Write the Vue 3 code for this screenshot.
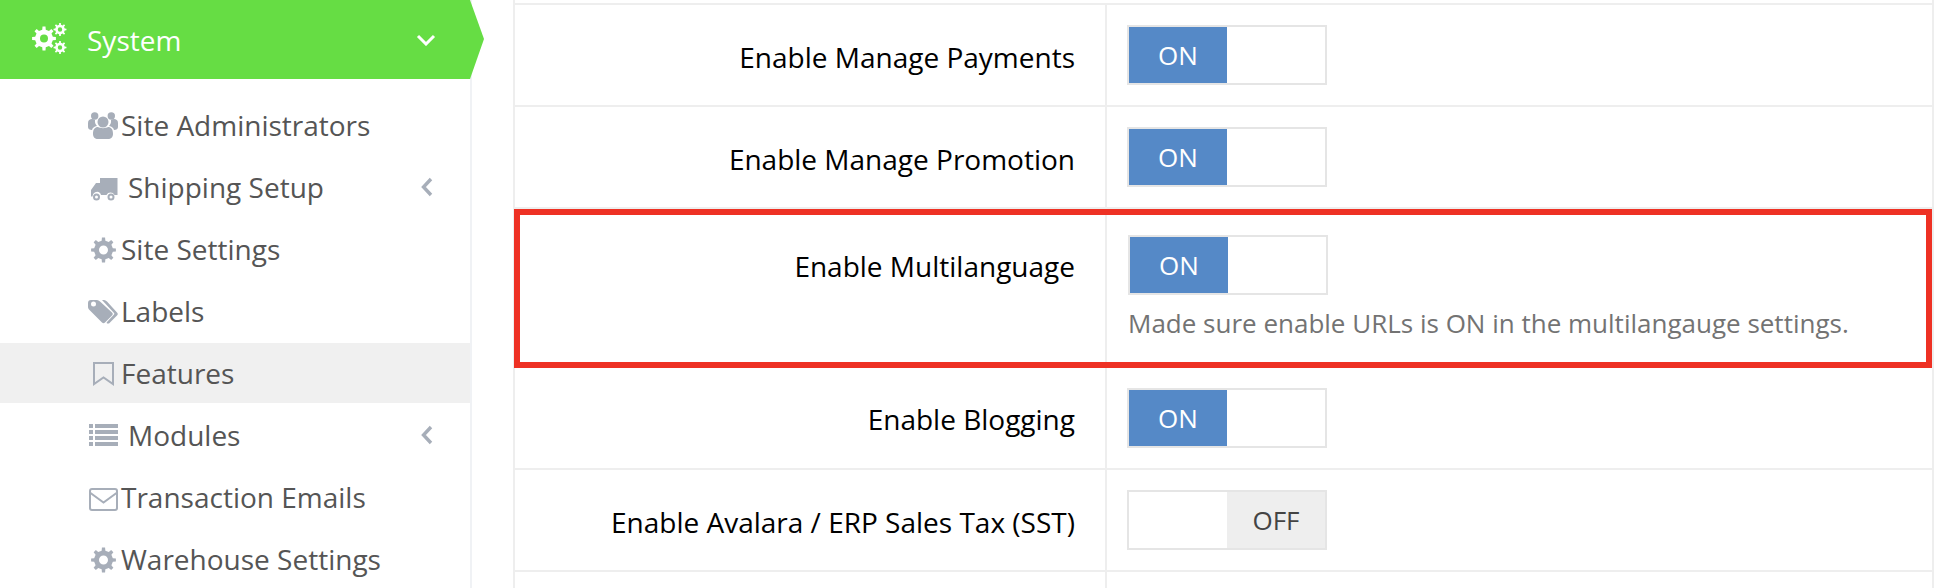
<script setup>
// gear outline as a path, teeth are plain trapezoids
function gear(cx, cy, outer, inner, hole, teeth = 8) {
  const step = (Math.PI * 2) / teeth
  const pts = []
  for (let i = 0; i < teeth; i++) {
    const a = i * step - Math.PI / 2
    const w = step * 0.2
    pts.push([a - w * 1.25, inner], [a - w * 0.8, outer], [a + w * 0.8, outer], [a + w * 1.25, inner])
  }
  const line = pts
    .map(([a, r], i) => `${i ? 'L' : 'M'}${(cx + Math.cos(a) * r).toFixed(2)} ${(cy + Math.sin(a) * r).toFixed(2)}`)
    .join('')
  return `${line}ZM${cx - hole} ${cy}a${hole} ${hole} 0 1 0 ${hole * 2} 0a${hole} ${hole} 0 1 0 ${-hole * 2} 0Z`
}

const cogs = [gear(12, 15.5, 12, 9, 4), gear(28, 6.5, 6.5, 4.8, 2.2), gear(28, 24.5, 6.5, 4.8, 2.2)]

const icons = {
  users: {
    fill: [
      'M9.5 12a5.5 5.5 0 1 0 11 0a5.5 5.5 0 1 0-11 0Z',
      'M3 6a3.7 3.7 0 1 0 7.4 0a3.7 3.7 0 1 0-7.4 0Z',
      'M19.600 6a3.7 3.7 0 1 0 7.4 0a3.7 3.7 0 1 0-7.4 0Z',
      'M0 13c0-3 2-4 4-4c1 0 2 .5 3 1c-.5 3 1 5 2 6c-3 .5-4.500 2-5 4c-2.500 0-4-1-4-3Z',
      'M30 13c0-3-2-4-4-4c-1 0-2 .5-3 1c.5 3-1 5-2 6c3 .5 4.500 2 5 4c2.500 0 4-1 4-3Z',
      'M5 24c0-5 2-7 5-7c2 1.500 8 1.500 10 0c3 0 5 2 5 7c0 3-2 5-5 5h-10c-3 0-5-2-5-5Z',
    ],
  },
  truck: {
    fill: [
      'M12 6h17.500v17h-3a4.500 4.500 0 0 0-8 0h-5.500a4.500 4.500 0 0 0-1-2Z',
      'M3 18l5-7h4v10a4.500 4.500 0 0 0-7.500 3.500h-1.500Z',
      'M5 25a3.500 3.500 0 1 0 7 0a3.500 3.500 0 1 0-7 0Zm2 0a1.500 1.500 0 1 1 3 0a1.500 1.500 0 1 1-3 0Z',
      'M19.500 25a3.500 3.500 0 1 0 7 0a3.500 3.500 0 1 0-7 0Zm2 0a1.500 1.500 0 1 1 3 0a1.500 1.500 0 1 1-3 0Z',
    ],
  },
  cog: { fill: [gear(15.5, 16, 12.5, 9.5, 4.5)] },
  tags: {
    fill: [
      'M0 7c0-2 1-3 3-3h6c1 0 2 .5 3 1.500l12 11c1 1 1 2 0 3l-7 7c-1 1-2 1-3 0l-12-12c-1-1-2-2-2-3.500ZM3 8a2.500 2.500 0 1 0 5 0a2.500 2.500 0 1 0-5 0Z',
      'M14 4h2c1 0 2 .5 3 1.500l10 11c1 1 1 2 0 3l-8 8h-2c-.5-.5-.5-1 0-1.500l7-7.500c.5-.5.5-1 0-1.500Z',
    ],
  },
  bookmark: { stroke: ['M6 5H25V26L15.500 19.500L6 26Z'] },
  list: {
    fill: [
      'M1 4h4v4h-4ZM7 4h23v4h-23ZM1 10h4v4h-4ZM7 10h23v4h-23ZM1 16h4v4h-4ZM7 16h23v4h-23ZM1 22h4v4h-4ZM7 22h23v4h-23Z',
    ],
  },
  envelope: {
    stroke: ['M4 7H27a2 2 0 0 1 2 2V26a2 2 0 0 1-2 2H4a2 2 0 0 1-2-2V9a2 2 0 0 1 2-2Z', 'M2.500 11L15.500 20.500L28.500 11'],
  },
}

const menu = [
  { label: 'Site Administrators', icon: 'users' },
  { label: 'Shipping Setup', icon: 'truck', sub: true },
  { label: 'Site Settings', icon: 'cog' },
  { label: 'Labels', icon: 'tags' },
  { label: 'Features', icon: 'bookmark', active: true },
  { label: 'Modules', icon: 'list', sub: true },
  { label: 'Transaction Emails', icon: 'envelope' },
  { label: 'Warehouse Settings', icon: 'cog' },
]

const rows = [
  { label: 'Enable Manage Payments', on: true },
  { label: 'Enable Manage Promotion', on: true },
  {
    label: 'Enable Multilanguage',
    on: true,
    marked: true,
    help: 'Made sure enable URLs is ON in the multilangauge settings.',
  },
  { label: 'Enable Blogging', on: true },
  { label: 'Enable Avalara / ERP Sales Tax (SST)', on: false },
  { label: '', empty: true },
]
</script>

<template>
  <div class="page">
    <aside class="sidebar">
      <div class="system">
        <svg class="cogs" width="36" height="34" viewBox="0 0 36 34">
          <path v-for="d in cogs" :key="d" :d="d" fill="#fff" fill-rule="evenodd" />
        </svg>
        <span class="system-label">System</span>
        <svg class="chevron-down" width="20" height="12" viewBox="0 0 20 12">
          <path d="M2 2L10 10L18 2" fill="none" stroke="#fff" stroke-width="3" />
        </svg>
      </div>

      <ul class="menu">
        <li v-for="item in menu" :key="item.label" class="menu-item" :class="{ active: item.active, wide: item.sub }">
          <svg class="menu-icon" width="30" height="30" viewBox="0 0 30 30">
            <path
              v-for="d in icons[item.icon].fill"
              :key="d"
              :d="d"
              fill="#a7aeb9"
              fill-rule="evenodd"
            />
            <path
              v-for="d in icons[item.icon].stroke"
              :key="d"
              :d="d"
              fill="none"
              stroke="#a7aeb9"
              stroke-width="2"
            />
          </svg>
          <span>{{ item.label }}</span>
          <svg v-if="item.sub" class="chevron-left" width="12" height="20" viewBox="0 0 12 20">
            <path d="M10 2L2.500 10L10 18" fill="none" stroke="#a7aeb9" stroke-width="3.400" />
          </svg>
        </li>
      </ul>
    </aside>

    <main class="content">
      <div
        v-for="row in rows"
        :key="row.label"
        class="row"
        :class="{ marked: row.marked, empty: row.empty }"
      >
        <div class="row-label">{{ row.label }}</div>
        <div class="row-field">
          <template v-if="!row.empty">
            <div class="toggle" :class="{ off: !row.on }">
              <span class="toggle-on">{{ row.on ? 'ON' : '' }}</span>
              <span class="toggle-off">{{ row.on ? '' : 'OFF' }}</span>
            </div>
            <p v-if="row.help" class="help">{{ row.help }}</p>
          </template>
        </div>
      </div>
    </main>
  </div>
</template>

<style scoped>
.page {
  display: flex;
  width: 1948px;
  height: 588px;
  overflow: hidden;
  background: #fff;
  font-family: "Open Sans", "Liberation Sans", sans-serif;
  font-size: 28px;
}

.sidebar {
  flex: none;
  width: 472px;
  box-sizing: border-box;
  border-right: 2px solid #f0f2f5;
}

.system {
  display: flex;
  align-items: center;
  width: 484px;
  height: 79px;
  box-sizing: border-box;
  padding-left: 32px;
  background: #66dd44;
  clip-path: polygon(0 0, 470px 0, 484px 39px, 470px 79px, 0 79px);
  color: #fff;
}

.cogs {
  flex: none;
}

.system-label {
  margin-left: 19px;
}

.chevron-down {
  margin-left: auto;
  margin-right: 48px;
}

.menu {
  margin: 0;
  padding: 16px 0 0;
  list-style: none;
}

.menu-item {
  display: flex;
  align-items: center;
  height: 60px;
  margin-bottom: 2px;
  padding: 0 37px 0 88px;
  color: #555;
}

.menu-item.active {
  background: #f0f0f0;
}

.menu-icon {
  flex: none;
  margin-right: 3px;
}

.menu-item.wide .menu-icon {
  margin-right: 10px;
}

.chevron-left {
  margin-left: auto;
}

.content {
  flex: none;
  width: 1421px;
  box-sizing: border-box;
  margin-left: 41px;
  padding-top: 3px;
  border-left: 2px solid #eee;
  border-right: 2px solid #eee;
}

.content::before {
  content: "";
  display: block;
  height: 2px;
  background: #eee;
}

.row {
  display: flex;
  height: 102px;
  box-sizing: border-box;
  border-bottom: 2px solid #eee;
}

.row.marked {
  height: 159px;
  margin-left: -1px;
  border: 6px solid #ee3124;
}

.row-label {
  flex: none;
  width: 592px;
  box-sizing: border-box;
  padding: 32px 30px 0 0;
  border-right: 2px solid #eee;
  color: #000;
  line-height: 40px;
  text-align: right;
}

.row.marked .row-label {
  width: 587px;
  padding-top: 31px;
}

.row.marked + .row .row-label {
  padding-top: 31px;
}

.row-field {
  padding: 20px 0 0 20px;
  font-size: 26px;
}

.row.marked .row-field {
  padding-left: 21px;
}

.toggle {
  display: flex;
  width: 200px;
  height: 60px;
  box-sizing: border-box;
  border: 2px solid #e5e5e5;
  line-height: 56px;
  text-align: center;
}

.toggle span {
  flex: 1;
}

.toggle-on {
  background: #5589c7;
  color: #fff;
}

.toggle-off {
  background: #fff;
}

.toggle.off .toggle-on {
  background: #fff;
}

.toggle.off .toggle-off {
  background: #eee;
  color: #444;
}

.help {
  margin: 8px 0 0;
  color: #737373;
  line-height: 40px;
}
</style>
